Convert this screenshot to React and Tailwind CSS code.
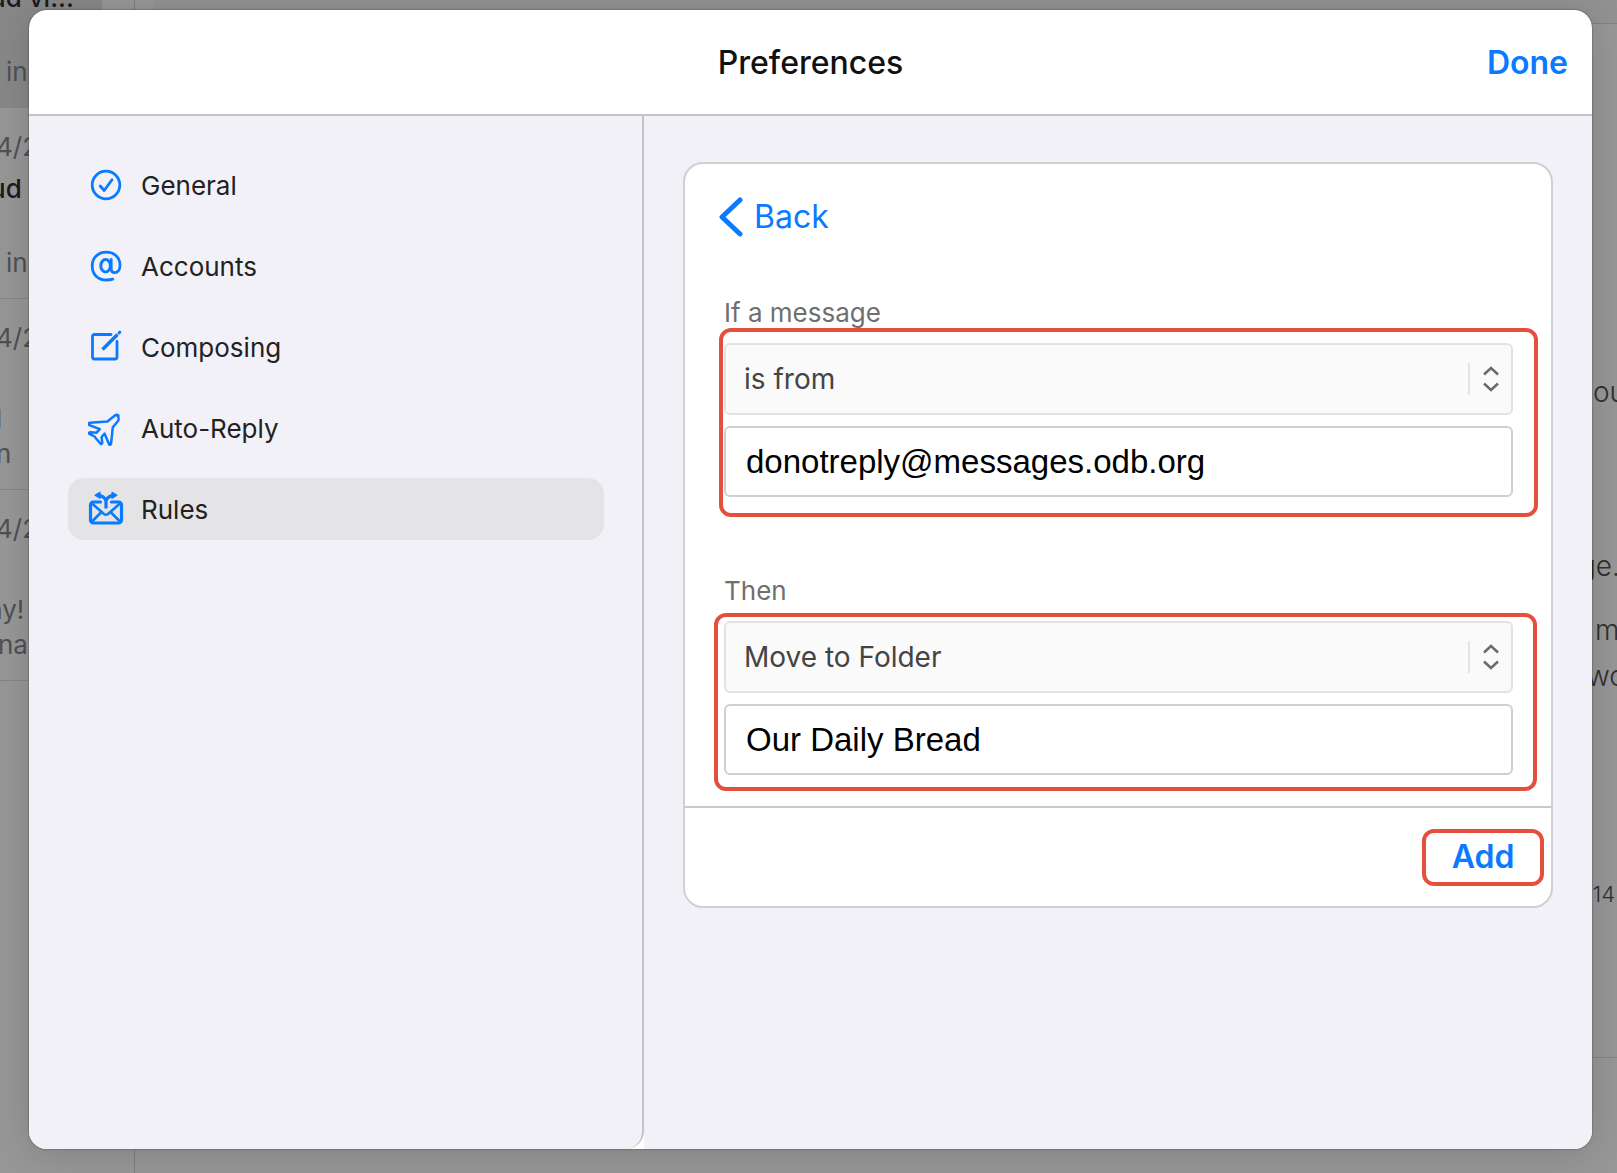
const messages = [
  { date: '', subject: 'ud vi...', lines: ['', 'in'], selected: true },
  { date: '4/2', subject: 'ud', lines: ['', 'in'] },
  { date: '4/2', subject: '', lines: ['l', 'n'] },
  { date: '4/2', subject: '', lines: ['ay!', 'na'] },
];

function MailBackdrop() {
  return (
    <div aria-hidden="true" className="absolute inset-0 flex overflow-hidden bg-[#979797] text-[26px] text-[#505052]">
      <div className="-mt-[83px] w-[134px] shrink-0">
        {messages.map((m, i) => (
          <div
            key={i}
            className={
              'h-[191px] whitespace-nowrap border-b border-[#858585] pt-[19px] ' +
              (m.selected ? 'mr-8 bg-[#888888]' : '')
            }
          >
            <div className="-ml-1 h-10 leading-10">{m.date}</div>
            <div className="-ml-2.5 h-11 font-medium leading-[44px] text-[#1c1c1c]">{m.subject}</div>
            {m.lines.map((line, j) => (
              <div
                key={j}
                className={'h-[35px] leading-[34px] ' + (line === 'in' ? 'ml-1.5' : line === 'ay!' ? '-ml-3' : line === 'na' ? '-ml-0.5' : '-ml-1')}
              >
                {line}
              </div>
            ))}
          </div>
        ))}
      </div>
      <div className="w-5 shrink-0 border-l border-[#7d7d7d]" />
      <div className="flex grow flex-col">
        <div className="h-6 border-b border-[#838383] bg-[#929292]" />
        <div className="flex h-[1034px] justify-end border-b border-[#858585] font-light text-[#303030]">
          <div className="flex w-[30px] shrink-0 flex-col whitespace-nowrap pt-[345px] text-[28px] leading-[46px]">
            <p className="pl-1.5">ou</p>
            <p className="-ml-2 mt-32">ge.</p>
            <p className="mt-[18px] pl-2">m</p>
            <p>wo</p>
            <p className="-ml-2 mt-[172px] text-[22px]">014</p>
          </div>
        </div>
      </div>
    </div>
  );
}

const iconProps = {
  viewBox: '0 0 36 36',
  fill: 'none',
  stroke: 'currentColor',
  strokeWidth: 2.8,
  strokeLinecap: 'round',
  strokeLinejoin: 'round',
  className: 'size-9 shrink-0',
  'aria-hidden': true,
};

function CheckIcon() {
  return (
    <svg {...iconProps}>
      <circle cx="18" cy="18" r="13.800" />
      <path d="M12.200 19l4 4.500L24 12.800" />
    </svg>
  );
}

function AtIcon() {
  return (
    <svg {...iconProps}>
      <ellipse cx="17.600" cy="17.800" rx="4.800" ry="6.200" strokeWidth="3" />
      <path d="M23.200 11.500v9.500c0 2.400 1.400 3.600 3.400 3.600 3.200 0 5.400-2.800 5.400-7.300C32 9.300 26.300 4.200 18.200 4.200 9.800 4.200 4.200 9.800 4.200 18c0 8.500 5.600 14 14.400 14 2.600 0 4.600-.3 6.200-.9" />
    </svg>
  );
}

function ComposeIcon() {
  return (
    <svg {...iconProps}>
      <path d="M23 5.500H6.500a2 2 0 0 0-2 2v20.500a2 2 0 0 0 2 2h20.500a2 2 0 0 0 2-2V12.500" />
      <path d="M14.500 20.500L29.500 5.500" strokeWidth="3.400" strokeLinecap="butt" />
      <path d="M31 4l.8-.8" strokeWidth="3" />
    </svg>
  );
}

function PlaneIcon() {
  return (
    <svg {...iconProps} viewBox="1 0 36 36">
      <path
        strokeWidth="2.500"
        transform="translate(-1 1.500)"
        d="M32.500 4.200c-1.300-1.200-3.400-.6-4.900.8l-6.200 5L3.800 11.300c-1.300 0-2.200 1.300-1 2l11 4.400-3.200 3.500-6.300-.5c-1 0-1.900 1.100-1 1.700l5.300 2.600c.5.300.4.800.8 1.200l5.200 6c.7.800 1.700-.3 1.600-1.200l-.6-5.500 3-3.300 4.500 10.500c.6 1.300 2 .3 2-1l1.700-16 4.800-5.700c1.500-1.600 1.300-4.600-.1-5.800z"
      />
    </svg>
  );
}

function RulesIcon() {
  return (
    <svg {...iconProps} viewBox="0 1 36 36">
      <path d="M12.500 12H5.500a3 3 0 0 0-3 3v15a3 3 0 0 0 3 3h25a3 3 0 0 0 3-3V15a3 3 0 0 0-3-3h-7" strokeWidth="3.200" />
      <path d="M4 13.500L16 24q2 1.500 4 0L32 13.500M4 31.500l9-9M32 31.500l-9-9" strokeWidth="2.600" />
      <path d="M18 18.500V10.500M10 5.300Q16 5.800 18 10.500Q20 5.800 26 5.300" strokeWidth="3.200" strokeLinecap="butt" />
      <path d="M7 5.300l5-3v6zM29 5.300l-5-3v6z" fill="currentColor" strokeWidth="1.200" />
    </svg>
  );
}

const sections = [
  { name: 'General', Icon: CheckIcon },
  { name: 'Accounts', Icon: AtIcon },
  { name: 'Composing', Icon: ComposeIcon },
  { name: 'Auto-Reply', Icon: PlaneIcon },
  { name: 'Rules', Icon: RulesIcon, active: true },
];

function SelectField({ id, value }) {
  return (
    <div className="relative">
      <select
        id={id}
        defaultValue={value}
        className="block h-[72px] w-full appearance-none rounded-md border-2 border-[#e2e2e2] bg-[#fafafa] pl-[18px] text-[28px] text-[#444444] outline-none"
      >
        <option>{value}</option>
      </select>
      <div className="pointer-events-none absolute inset-y-0 right-3 flex items-center gap-[11px]">
        <span className="h-8 w-0.5 bg-[#e4e4e4]" />
        <svg viewBox="0 0 20 28" className="h-7 w-5" fill="none" stroke="#6b6b6b" strokeWidth="2.500" aria-hidden="true">
          <path d="M3 9.500l7-6.500 7 6.500M3 18.500l7 6.500 7-6.500" />
        </svg>
      </div>
    </div>
  );
}

function TextField({ label, value }) {
  return (
    <input
      type="text"
      aria-label={label}
      defaultValue={value}
      className="mt-[11px] block h-[71px] w-full rounded-md border-2 border-[#cfcfcf] bg-white pl-5 font-['Liberation_Sans',Arial,sans-serif] text-[33px] text-black outline-none"
    />
  );
}

function Highlight({ className }) {
  return <span aria-hidden="true" className={'pointer-events-none absolute rounded-xl border-4 border-[#e5503c] ' + className} />;
}

export default function App() {
  return (
    <div className="relative min-h-screen font-[Inter,sans-serif]">
      <MailBackdrop />
      <div className="relative flex min-h-screen pt-2.5 pr-[25px] pb-6 pl-[29px]">
        <main
          role="dialog"
          aria-labelledby="title"
          className="flex grow flex-col overflow-hidden rounded-[18px] bg-white shadow-[0_4px_40px_rgba(0,0,0,0.15),0_0_2px_rgba(0,0,0,0.5)]"
        >
          <header className="grid h-[106px] shrink-0 grid-cols-[1fr_auto_1fr] items-center border-b-2 border-[#c4c4c6] px-6 pt-0.5">
            <h1 id="title" className="col-start-2 text-[32px] font-medium text-[#111111]">Preferences</h1>
            <button type="button" className="justify-self-end text-[32px] font-semibold text-[#0a7aff]">Done</button>
          </header>
          <div className="flex grow">
            <nav className="flex w-[615px] shrink-0 flex-col gap-[19px] rounded-br-[18px] border-r-2 border-[#c4c4c6] bg-[#f2f1f7] pt-[38px] pr-[38px] pl-[39px]">
              {sections.map(({ name, Icon, active }) => (
                <button
                  key={name}
                  type="button"
                  aria-current={active ? 'page' : undefined}
                  className={
                    'flex h-[62px] items-center gap-[17px] rounded-2xl pl-5 text-[26px] text-[#222222] ' +
                    (active ? 'bg-[#e4e4e6]' : '')
                  }
                >
                  <span className="text-[#0a7aff]"><Icon /></span>
                  {name}
                </button>
              ))}
            </nav>
            <section className="grow bg-[#f2f1f7] pt-[46px] pr-[39px] pl-[39px]">
              <form onSubmit={(e) => e.preventDefault()} className="rounded-[20px] border-2 border-[#d0d0d2] bg-white">
                <div className="pt-[29px] pr-[38px] pb-[31px] pl-[39px]">
                  <button type="button" className="-ml-1.5 flex h-12 items-center gap-2.5 text-[32px] text-[#0a7aff]">
                    <svg viewBox="0 0 26 40" className="h-10 w-[26px]" fill="none" stroke="currentColor" strokeWidth="5" strokeLinecap="round" strokeLinejoin="round" aria-hidden="true">
                      <path d="M22 3L4 20l18 17" />
                    </svg>
                    Back
                  </button>
                  <label htmlFor="condition" className="mt-[53px] block h-[49px] text-[26px] leading-[38px] text-[#6f6f6f]">If a message</label>
                  <div className="relative">
                    <SelectField id="condition" value="is from" />
                    <TextField label="Sender address" value="donotreply@messages.odb.org" />
                    <Highlight className="-top-[15px] -right-[25px] -bottom-5 -left-[5px]" />
                  </div>
                  <label htmlFor="action" className="mt-[75px] block h-[49px] text-[26px] leading-[38px] text-[#6f6f6f]">Then</label>
                  <div className="relative">
                    <SelectField id="action" value="Move to Folder" />
                    <TextField label="Folder name" value="Our Daily Bread" />
                    <Highlight className="-top-2 -right-6 -bottom-4 -left-2.5" />
                  </div>
                </div>
                <footer className="flex h-[100px] items-center justify-end border-t-2 border-[#c9c9c9] pr-[7px]">
                  <button type="submit" className="relative h-[57px] w-[122px] text-[32px] font-semibold text-[#0a7aff]">
                    <Highlight className="inset-0" />
                    Add
                  </button>
                </footer>
              </form>
            </section>
          </div>
        </main>
      </div>
    </div>
  );
}
